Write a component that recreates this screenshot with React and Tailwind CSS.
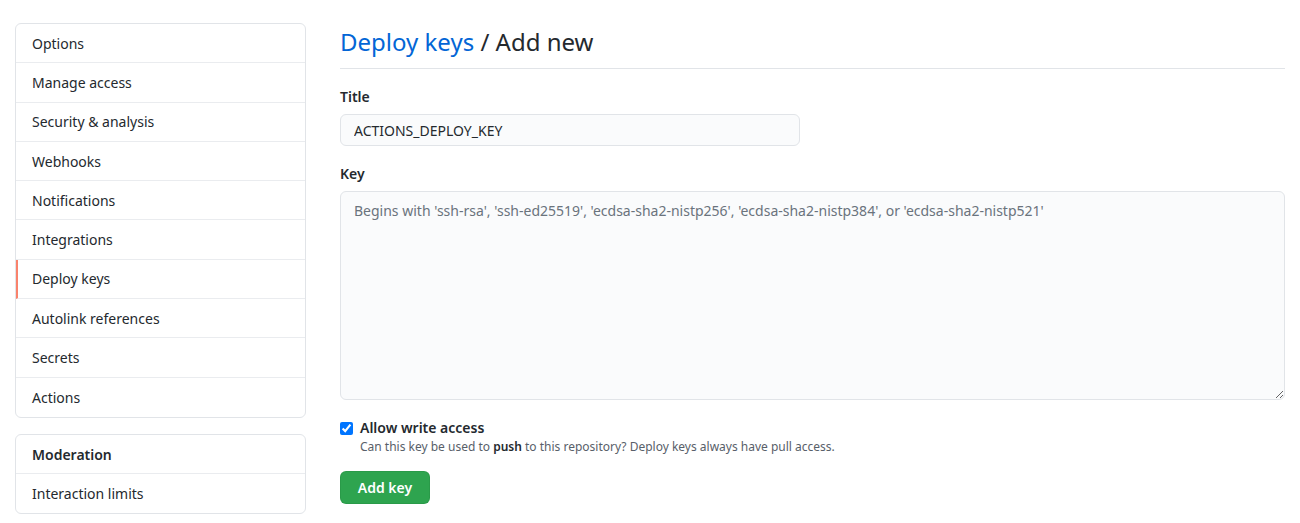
import React from "react";

const items = [
  "Options",
  "Manage access",
  "Security & analysis",
  "Webhooks",
  "Notifications",
  "Integrations",
  "Deploy keys",
  "Autolink references",
  "Secrets",
  "Actions",
];

export default function App() {
  return (
    <div
      className="w-[1300px] h-[523px] bg-white text-[#24292e] text-[14px] flex gap-[34px] pl-[15px] pt-[23px] overflow-hidden"
      style={{ fontFamily: '"Segoe UI", "Noto Sans", "Liberation Sans", sans-serif' }}
    >
      {/* sidebar */}
      <div className="w-[291px] flex-shrink-0 flex flex-col gap-[16px]">
        <nav className="border border-[#e1e4e8] rounded-md overflow-hidden">
          {items.map((name, i) => (
            <div
              key={name}
              className={`h-[39.3px] flex items-center ${i < items.length - 1 ? "border-b border-[#eaecef]" : ""} ${name === "Deploy keys" ? "border-l-2 border-l-[#f9826c] pl-[14px]" : "pl-[16px]"}`}
            >
              {name}
            </div>
          ))}
        </nav>
        <nav className="border border-[#e1e4e8] rounded-md overflow-hidden">
          <div className="h-[39.3px] flex items-center pl-[16px] border-b border-[#eaecef] font-semibold">Moderation</div>
          <div className="h-[39px] flex items-center pl-[16px]">Interaction limits</div>
        </nav>
      </div>

      {/* main */}
      <div className="w-[945px] flex-shrink-0">
        <div className="border-b border-[#e1e4e8] pb-[10px] pt-[2px]">
          <h2 className="text-[24px] leading-[33px] font-normal">
            <span className="text-[#0366d6]">Deploy keys</span> / Add new
          </h2>
        </div>

        <div className="mt-[17px]">
          <label className="block font-semibold leading-[21px]">Title</label>
          <input
            readOnly
            value="ACTIONS_DEPLOY_KEY"
            className="mt-[7px] w-[460px] h-[32px] px-[13px] bg-[#fafbfc] border border-[#e1e4e8] rounded-md text-[14px] text-[#24292e] outline-none"
          />
        </div>

        <div className="mt-[17px]">
          <label className="block font-semibold leading-[21px]">Key</label>
          <textarea
            readOnly
            placeholder="Begins with 'ssh-rsa', 'ssh-ed25519', 'ecdsa-sha2-nistp256', 'ecdsa-sha2-nistp384', or 'ecdsa-sha2-nistp521'"
            className="mt-[7px] block w-full h-[209px] px-[13px] py-[8px] bg-[#fafbfc] border border-[#e1e4e8] rounded-md text-[14px] leading-[21px] placeholder:text-[#6a737d] outline-none resize-y"
          />
        </div>

        <div className="mt-[19px] flex gap-[7px]">
          <input type="checkbox" defaultChecked className="mt-[3px] w-[13px] h-[13px] accent-[#0075ff]" />
          <div>
            <div className="font-semibold leading-[18px]">Allow write access</div>
            <div className="text-[12px] text-[#586069] leading-[20px]">
              Can this key be used to <b className="font-semibold text-[#24292e]">push</b> to this repository? Deploy keys always have pull access.
            </div>
          </div>
        </div>

        <button className="mt-[14px] w-[90px] h-[33px] bg-[#2ea44f] text-white font-semibold rounded-md border border-[#22863a]/30">
          Add key
        </button>
      </div>
    </div>
  );
}
